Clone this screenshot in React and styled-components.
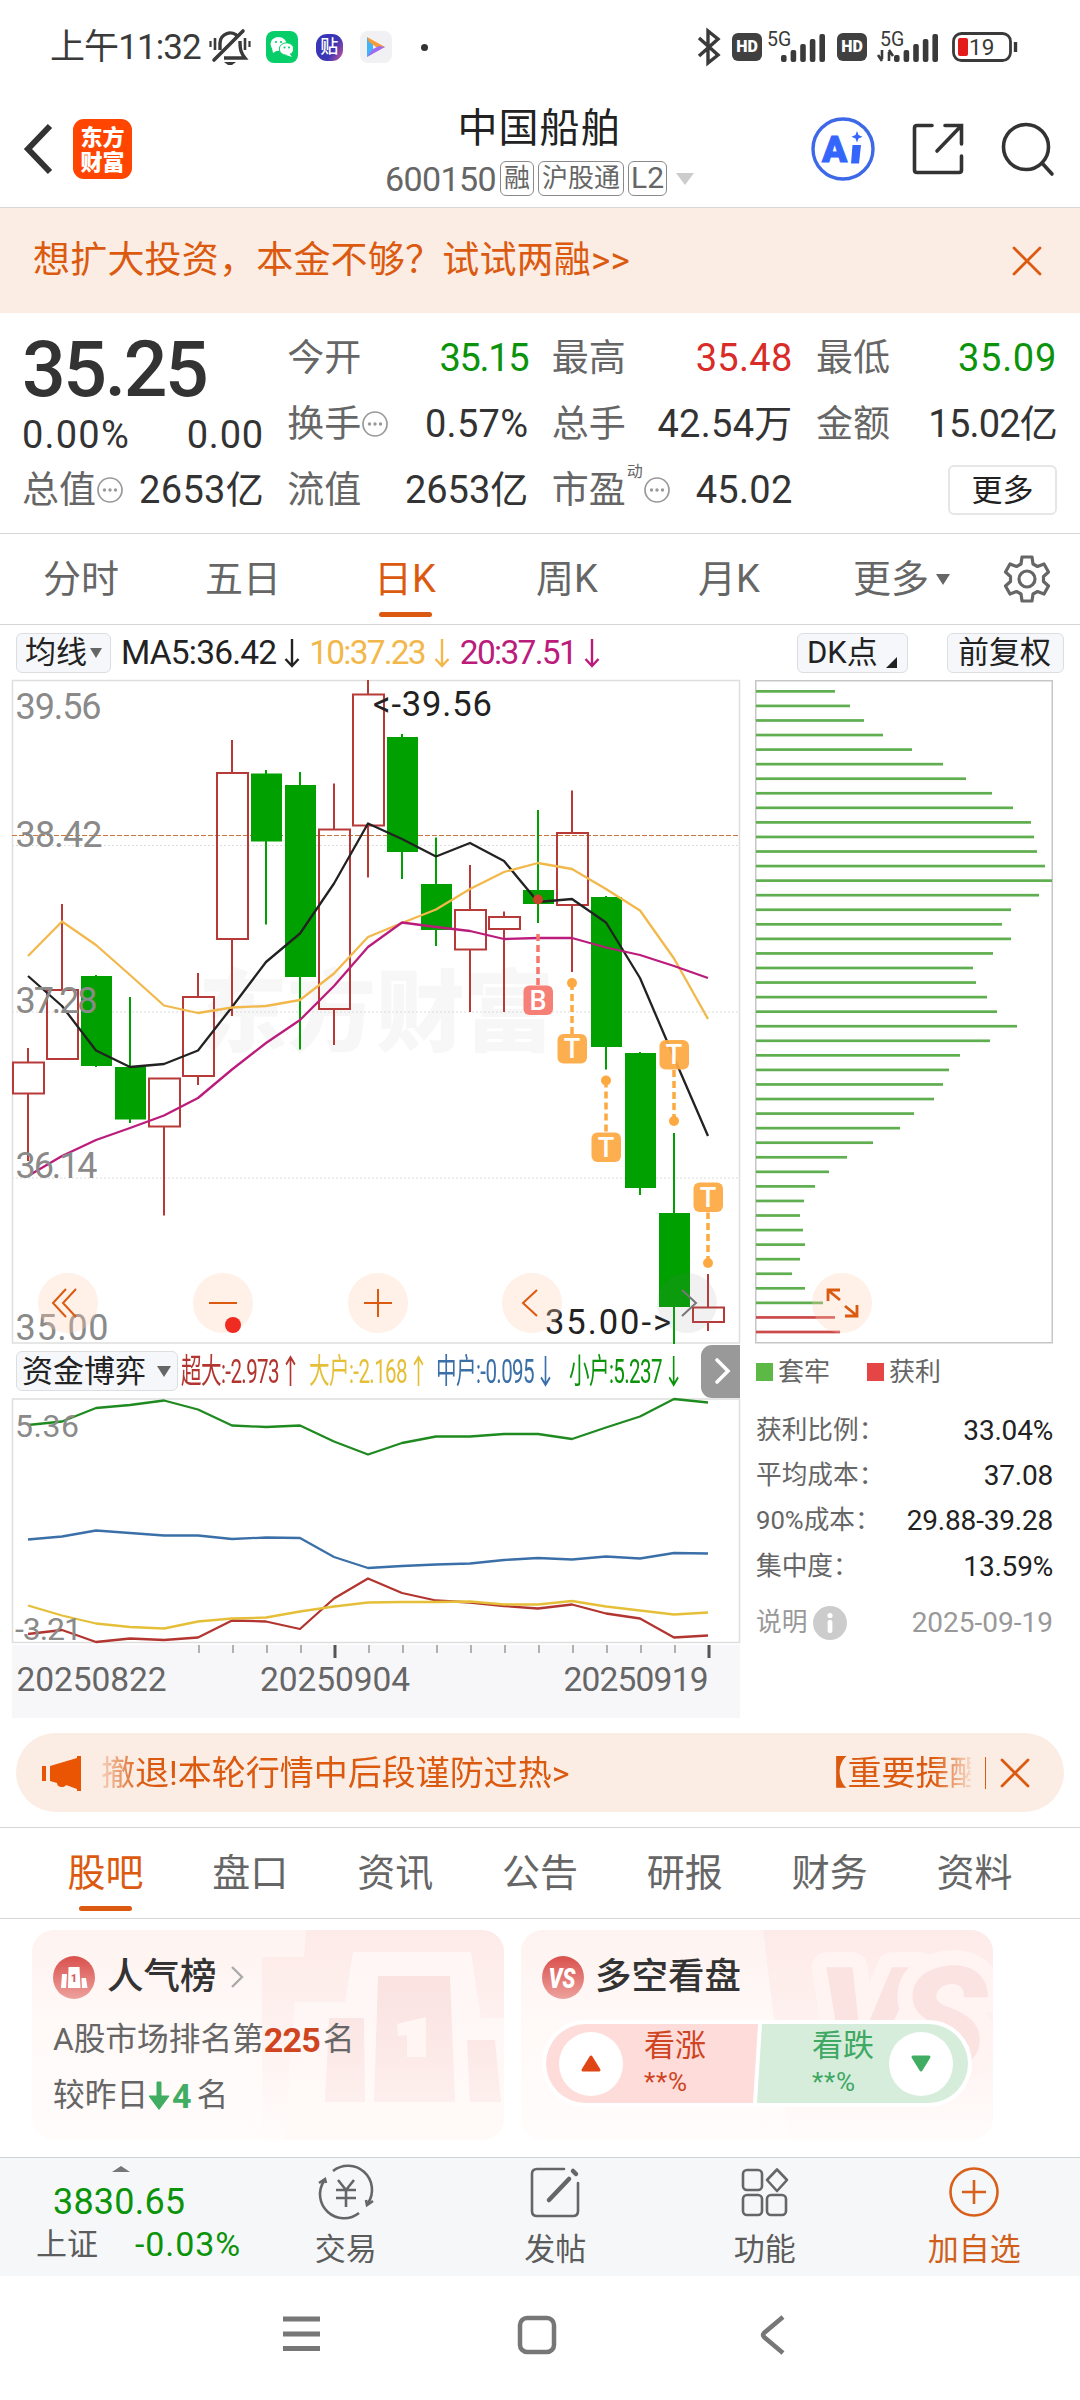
import React from 'react';
import styled, { createGlobalStyle } from 'styled-components';

const GlobalStyle = createGlobalStyle`
  body {
    margin: 0;
    background: #fff;
    font-family: Roboto, 'Noto Sans CJK SC', sans-serif;
    color: #333;
  }
  * {
    box-sizing: border-box;
  }
  svg {
    display: block;
    flex: none;
    overflow: visible;
  }
`;

const ORANGE = '#db5a10';
const GREEN = '#00a000';
const RED = '#b83a38';

const Page = styled.div`
  width: 1080px;
  height: 2400px;
  overflow: hidden;
  display: flex;
  flex-direction: column;
`;

const Text = styled.span`
  font-size: ${(p) => p.$size || 37}px;
  line-height: 1;
  white-space: nowrap;
  color: ${(p) => p.$color || '#333'};
  font-weight: ${(p) => p.$weight || 400};
  letter-spacing: ${(p) => p.$ls || 0}px;
  margin-left: ${(p) => p.$ml || 0}px;
`;

/* ---------- status bar ---------- */

const StatusBar = styled.div`
  height: 95px;
  padding: 0 61px 1px 50px;
  display: flex;
  align-items: center;
  justify-content: space-between;
`;

const StatusGroup = styled.div`
  display: flex;
  align-items: center;
`;

const AppBadge = styled.div`
  width: 32px;
  height: 32px;
  margin-left: ${(p) => p.$ml}px;
  border-radius: 8px;
  background: ${(p) => p.$bg};
  display: flex;
  align-items: center;
  justify-content: center;
`;

const Dot = styled.div`
  width: 7px;
  height: 7px;
  margin-left: 29px;
  border-radius: 50%;
  background: #333;
`;

const HdBadge = styled.div`
  width: 30px;
  height: 28px;
  margin-left: ${(p) => p.$ml}px;
  border-radius: 6px;
  background: #404040;
  color: #fff;
  font-size: 16px;
  font-weight: 900;
  line-height: 28px;
  text-align: center;
`;

const BellOff = () => (
  <svg width="42" height="38" viewBox="0 0 42 38" fill="none" stroke="#3a3a3a" strokeWidth="3.4">
    <path d="M11 22V15a10 10 0 0 1 18-6" />
    <path d="M31 13c0 9 1 12 5 17H15" />
    <path d="M5 32L34 3" strokeWidth="3.6" strokeLinecap="round" />
    <path d="M6 10v12M36 10v12" strokeWidth="2.6" />
    <path d="M1.5 13v6M40.5 13v6" strokeWidth="2.2" />
    <path d="M15 34h12l-4 3h-4z" fill="#3a3a3a" stroke="none" />
  </svg>
);

const WeChat = () => (
  <svg width="26" height="22" viewBox="0 0 26 22" fill="#fff">
    <ellipse cx="9.500" cy="8" rx="8" ry="7" />
    <path d="M3 12l1 5 5-3z" />
    <ellipse cx="17.500" cy="13" rx="7.200" ry="6.200" stroke="#07ce68" />
    <path d="M20 17l3 4-6-2z" />
    <g fill="#07ce68">
      <circle cx="7" cy="6" r="1.100" />
      <circle cx="12" cy="6" r="1.100" />
      <circle cx="15.500" cy="11.500" r="1" />
      <circle cx="20" cy="11.500" r="1" />
    </g>
  </svg>
);

const TiebaBadge = styled.div`
  width: 27px;
  height: 27px;
  margin-left: 18px;
  border-radius: 11px;
  background: linear-gradient(120deg, #3a35b5 60%, #d0559b);
  color: #fff;
  font-size: 18px;
  font-weight: 500;
  line-height: 26px;
  text-align: center;
`;

const PlayMark = () => (
  <svg width="20" height="22" viewBox="0 0 20 22">
    <path d="M1 1v20l6-4V7z" fill="#41b4f7" />
    <path d="M1 1l18 10-6 2L3 6z" fill="#f79a3a" />
    <path d="M19 11L1 21l6-8 6-3z" fill="#a06af0" />
  </svg>
);

const Bluetooth = () => (
  <svg width="24" height="38" viewBox="0 0 24 38" fill="none" stroke="#3a3a3a" strokeWidth="3.400">
    <path d="M2 10l19 17-10 8V3l10 8L2 28" />
  </svg>
);

const Signal = ({ data }) => (
  <svg width="62" height="34" viewBox="0 0 62 34" fill="#3a3a3a">
    <text x={data ? 3 : 0} y="15.500" fontSize="19.500">
      5G
    </text>
    {data && (
      <path d="M5 20v9M5 31l-4-6M12 31v-9M12 20l4 6" stroke="#3a3a3a" strokeWidth="2.600" />
    )}
    {[7, 12, 18, 23, 28].map((h, i) => (
      <rect key={h} x={(data ? 17 : 14) + i * 9.600} y={32 - h} width="5.600" height={h} rx="2" />
    ))}
  </svg>
);

const Battery = () => (
  <svg width="67" height="30" viewBox="0 0 67 30">
    <rect x="1.500" y="1.500" width="57" height="27" rx="8" fill="none" stroke="#3a3a3a" strokeWidth="2.800" />
    <rect x="6" y="6" width="10" height="18" rx="2" fill="#e31b1b" />
    <path d="M63.500 10v10" stroke="#3a3a3a" strokeWidth="3.400" />
    <text x="17" y="23" fontSize="22.500" fill="#3a3a3a">
      19
    </text>
  </svg>
);

/* ---------- header ---------- */

const Header = styled.header`
  height: 113px;
  padding: 3px 25px 8px 24px;
  border-bottom: 1px solid #d6d8da;
  display: grid;
  grid-template-columns: 260px 1fr 260px;
  align-items: center;
`;

const HeaderSide = styled.div`
  display: flex;
  align-items: center;
  justify-content: ${(p) => (p.$end ? 'flex-end' : 'flex-start')};
  gap: ${(p) => p.$gap}px;
`;

const Logo = styled.div`
  width: 59px;
  height: 60px;
  padding-top: 6px;
  border-radius: 11px;
  background: #ff4500;
  color: #fff;
  font-size: 22px;
  font-weight: 900;
  line-height: 25px;
  text-align: center;
`;

const TitleBlock = styled.div`
  display: flex;
  flex-direction: column;
  align-items: center;
  padding-top: 8px;
`;

const SubTitle = styled.div`
  display: flex;
  align-items: center;
  margin-top: 12px;
  height: 36px;
`;

const Tag = styled.span`
  height: 35px;
  margin-left: 4px;
  padding: 0 ${(p) => p.$pad || 3}px;
  border: 1.5px solid #8a8a8a;
  border-radius: 6px;
  color: #666;
  font-size: ${(p) => p.$size || 26}px;
  line-height: 32px;
`;

const Triangle = styled.i`
  width: 0;
  height: 0;
  margin-left: ${(p) => p.$ml || 0}px;
  border-left: ${(p) => p.$w}px solid transparent;
  border-right: ${(p) => p.$w}px solid transparent;
  border-top: ${(p) => p.$h}px solid ${(p) => p.$color || '#666'};
`;

const AiIcon = () => (
  <svg width="64" height="66" viewBox="0 0 64 66">
    <circle cx="32" cy="33" r="30" fill="none" stroke="#3d68e8" strokeWidth="3.400" />
    <text x="11" y="46" fontSize="37" fontWeight="900" fill="#3466fb" stroke="#3466fb">
      A
    </text>
    <path d="M41.500 29h8.500l-2 18.500h-8z" fill="#3466fb" />
    <path d="M46 15l1.500 4 4 1.700-4 1.700-1.500 4-1.500-4-4-1.700 4-1.700z" fill="#3466fb" />
  </svg>
);

const ShareIcon = () => (
  <svg width="52" height="52" viewBox="0 0 52 52" fill="none" stroke="#333" strokeWidth="3.600">
    <path d="M20 2.500H5Q2.500 2.500 2.500 5v42q0 2.500 2.500 2.500h42q2.500 0 2.500-2.500V33" strokeLinecap="round" />
    <path d="M33 2.500h16.500V21M49 3L25 28" strokeLinecap="round" />
  </svg>
);

const SearchIcon = () => (
  <svg width="54" height="56" viewBox="0 0 54 56" fill="none" stroke="#333" strokeWidth="3.600">
    <circle cx="25" cy="26" r="22.500" />
    <path d="M41 42l10 11" strokeLinecap="round" />
  </svg>
);

const Banner = styled.div`
  height: 105px;
  padding: 0 38px 0 33px;
  background: #fcede4;
  display: flex;
  align-items: center;
  justify-content: space-between;
`;

const Close = ({ size = 30 }) => (
  <svg width={size} height={size} viewBox="0 0 30 30" stroke={ORANGE} strokeWidth="2.800" strokeLinecap="round">
    <path d="M2 2l26 26M28 2L2 28" />
  </svg>
);

/* ---------- quote panel ---------- */

const Quote = styled.section`
  height: 221px;
  padding: 12px 23px 0 22px;
  border-bottom: 1px solid #d6d6d6;
  display: grid;
  grid-template-columns: 242px repeat(3, 241px);
  grid-auto-rows: 66px;
  justify-content: space-between;
`;

const PriceCell = styled.div`
  grid-row: span 2;
`;

const Price = styled.div`
  height: 88px;
  font-size: 77px;
  font-weight: 500;
  line-height: 90px;
  letter-spacing: -2.400px;
`;

const Line = styled.div`
  display: flex;
  align-items: center;
  justify-content: space-between;
  height: ${(p) => p.$h || 66}px;
`;

const Label = styled.div`
  display: flex;
  align-items: center;
  gap: 1px;
  font-size: 37px;
  line-height: 1;
  color: #666;
  sup {
    align-self: flex-start;
    margin-top: -8px;
    font-size: 16px;
    line-height: 1;
  }
`;

const MoreButton = styled.button`
  width: 109px;
  height: 50px;
  padding: 0;
  border: 2px solid #e6e6e6;
  border-radius: 6px;
  background: #fff;
  font: inherit;
  font-size: 31px;
  line-height: 1;
  color: #222;
`;

const Hint = () => (
  <svg width="26" height="26" viewBox="0 0 26 26">
    <circle cx="13" cy="13" r="12" fill="none" stroke="#999" strokeWidth="1.700" />
    {[7.500, 13, 18.500].map((x) => (
      <circle key={x} cx={x} cy="13" r="1.700" fill="#999" />
    ))}
  </svg>
);

const Field = ({ label, value, color, hint, sup, ls = 0.300 }) => (
  <Line>
    <Label>
      {label}
      {sup && <sup>{sup}</sup>}
      {hint && <Hint />}
    </Label>
    <Text $size={38} $color={color} $ls={ls}>
      {value}
    </Text>
  </Line>
);

/* ---------- tabs ---------- */

const PeriodTabs = styled.nav`
  height: 91px;
  border-bottom: 1px solid #d6d6d6;
  display: grid;
  grid-template-columns: repeat(5, 162px) 163px 1fr;
`;

const Tab = styled.div`
  display: flex;
  align-items: center;
  justify-content: center;
  position: relative;
  font-size: 38px;
  line-height: 1;
  color: ${(p) => (p.$active ? ORANGE : '#666')};
  &::after {
    content: '';
    display: ${(p) => (p.$active ? 'block' : 'none')};
    position: absolute;
    left: calc(50% - 26.500px);
    bottom: 7px;
    width: 53px;
    height: 5px;
    border-radius: 3px;
    background: ${ORANGE};
  }
`;

const GearIcon = () => (
  <svg width="46" height="48" viewBox="0 0 46 48" fill="none" stroke="#666" strokeWidth="3.200" strokeLinejoin="round">
    <path d="M18 2h10l1 7 4.500 2.500 6.500-2.500 4.500 8-5 4.500v5l5 4.500-4.500 8-6.500-2.500L29 39l-1 7H18l-1-7-4.500-2.500L6 39l-4.500-8 5-4.500v-5l-5-4.500L6 9l6.500 2.500L17 9z" />
    <circle cx="23" cy="24" r="8" />
  </svg>
);

/* ---------- charts ---------- */

const MaBar = styled.div`
  height: 55px;
  padding: 0 16px 0;
  display: flex;
  align-items: center;
`;

const Spacer = styled.div`
  flex: 1;
`;

const Chip = styled.div`
  flex: none;
  width: ${(p) => p.$w}px;
  height: 40px;
  margin-left: ${(p) => p.$ml || 0}px;
  padding-left: ${(p) => p.$pl || 8}px;
  border: 1.500px solid #dcdee2;
  border-radius: 6px;
  background: #f5f7fa;
  color: #222;
  font-size: 31px;
  line-height: 1;
  white-space: nowrap;
  display: flex;
  align-items: center;
`;

const Corner = styled.i`
  align-self: flex-end;
  margin: 0 0 4px 8px;
  border-left: 11px solid transparent;
  border-bottom: 11px solid #222;
`;

const Arrow = ({ color, up, ml = 8, w = 16, h = 30 }) => (
  <svg
    width={w}
    height={h}
    viewBox="0 0 16 30"
    preserveAspectRatio="none"
    fill="none"
    stroke={color}
    strokeWidth="2.400"
    style={{ marginLeft: ml }}
  >
    <path d={up ? 'M8 29V2M1.500 9L8 2l6.500 7' : 'M8 1v27M1.500 21L8 28l6.500-7'} />
  </svg>
);

const ChartArea = styled.section`
  position: relative;
  height: 1038px;
  padding-left: 12px;
  display: flex;
  gap: 15px;
`;

const LeftCol = styled.div`
  width: 728px;
`;

const RightCol = styled.div`
  width: 298px;
`;

const Svg = styled.svg`
  text {
    white-space: pre;
  }
`;

const STEP = 34;
const cx = (i) => 28 + i * STEP;

// direction, high, body top, body bottom, low
const candles = [
  ['r', 1048, 1062.500, 1093.500, 1161],
  ['r', 904, 990, 1059, 1059],
  ['g', 975, 976, 1066, 1067],
  ['g', 997, 1067, 1119.500, 1123],
  ['r', 1078, 1078.500, 1126.500, 1215.500],
  ['r', 973, 997, 1076, 1085],
  ['r', 740, 773, 939, 1016],
  ['g', 770, 773.500, 841.500, 924.500],
  ['g', 772, 785, 977, 1049.500],
  ['r', 783.500, 829.500, 1009, 1045],
  ['r', 680, 694.500, 825.500, 877.500],
  ['g', 734, 737, 852, 879],
  ['g', 837.500, 884, 930, 946],
  ['r', 865, 910, 949.500, 1012],
  ['r', 911.500, 917, 929, 1012],
  ['g', 810, 890, 904, 923],
  ['r', 790.500, 833, 905, 972],
  ['g', 896, 897, 1047, 1069.500],
  ['g', 1052, 1053, 1188, 1195],
  ['g', 1133, 1213, 1307, 1344],
  ['r', 1274, 1307.500, 1322, 1331],
];

const ma5 = [976, 1006, 1050.500, 1067, 1064, 1050.500, 1007, 962, 933.500, 883.500, 823.500, 839, 856.500, 843, 861, 902, 899, 922.500, 978, 1057.500, 1136];
const ma10 = [956, 921.500, 945, 975, 1005.500, 1013, 1007.500, 1006, 1000, 973.500, 937, 923, 909.500, 889, 872, 863, 869, 889, 910.500, 958.500, 1019];
const ma20 = [1176, 1156, 1140, 1128, 1115.500, 1098, 1069.500, 1043, 1020, 986, 947, 922.500, 927, 931, 939, 938, 938, 947.500, 955, 966, 978];

const funds = [
  ['#1f8a1f', [1425, 1421.500, 1408, 1405, 1400.500, 1409.500, 1425.500, 1427, 1425.500, 1441.500, 1454.500, 1443, 1436.500, 1436.500, 1434, 1434, 1439, 1427.500, 1416.500, 1399, 1402.500]],
  ['#3a6fa8', [1539.500, 1536.500, 1530.500, 1533, 1535.500, 1535.500, 1539, 1537.500, 1538, 1557, 1568, 1566, 1564.500, 1563.500, 1560, 1558, 1559.500, 1556.500, 1558.500, 1553, 1553.500]],
  ['#b23530', [1634, 1630, 1642, 1638.500, 1640, 1637.500, 1620.500, 1621.500, 1629, 1598.500, 1578.500, 1593, 1600.500, 1602.500, 1606, 1608.500, 1604.500, 1613.500, 1618.500, 1637.500, 1635.500]],
  ['#e6bf38', [1605.500, 1615.500, 1623.500, 1627, 1628.500, 1621.500, 1618.500, 1617.500, 1611.500, 1606.500, 1602.500, 1602, 1602, 1601.500, 1604.500, 1604.500, 1601, 1606.500, 1610.500, 1614.500, 1612.500]],
];

// candle index, letter, box top, dot y
const marks = [
  [15, 'B', 985.500, 899.500],
  [16, 'T', 1034, 983],
  [17, 'T', 1132.500, 1080.500],
  [19, 'T', 1040, 1121],
  [20, 'T', 1182.500, 1263],
];

const chips = [79, 94, 108, 127, 156, 187, 210, 236, 257, 275, 278, 281, 289, 296, 283, 255, 246, 255, 237, 217, 220, 231, 241, 261, 234, 204, 193, 187, 178, 158, 144, 117, 91, 73, 59, 48, 44, 47, 49, 44, 36, 49, 67, 79, 84];

const toPoints = (ys) => ys.map((y, i) => `${cx(i)},${y}`).join(' ');

const Series = ({ ys, color }) => (
  <polyline points={toPoints(ys)} fill="none" stroke={color} strokeWidth="2.300" strokeLinejoin="round" />
);

const Candle = ({ i, c: [dir, high, top, bottom, low] }) => {
  const x = cx(i);
  if (dir === 'g') {
    return (
      <g fill={GREEN}>
        <rect x={x - 1} y={high} width="2" height={low - high} />
        <rect x={x - 15} y={top} width="31" height={bottom - top} />
      </g>
    );
  }
  return (
    <g fill="none" stroke={RED} strokeWidth="2">
      <path d={`M${x} ${high}V${top}M${x} ${bottom}V${low}`} />
      <rect x={x - 15} y={top} width="31" height={bottom - top} />
    </g>
  );
};

const Mark = ({ i, letter, top, dot }) => {
  const x = cx(i);
  const color = letter === 'B' ? '#f6766c' : '#fda942';
  const from = letter === 'B' ? 934 : dot;
  const to = dot > top ? top + 30 : top;
  return (
    <g>
      <line x1={x} x2={x} y1={from} y2={to} stroke={color} strokeWidth="3.500" strokeDasharray="7 4" />
      <circle cx={x} cy={dot} r="5" fill={letter === 'B' ? '#c8452c' : color} />
      <rect x={x - 14.500} y={top} width="29.500" height="29.500" rx="6" fill={color} fillOpacity=".93" />
      <text x={x} y={top + 24} fontSize="27" fontWeight="500" fill="#fff" textAnchor="middle">
        {letter}
      </text>
    </g>
  );
};

const KLine = () => (
  <Svg width="728" height="664" viewBox="12 680 728 664">
    <text x="198" y="1044" fontSize="89" fontWeight="900" fill="#f7f7f7">
      东方财富
    </text>
    <rect x="12.500" y="680.500" width="727" height="662.500" fill="none" stroke="#dedede" strokeWidth="1.500" />
    {[845.500, 1012, 1178].map((y) => (
      <line key={y} x1="12" x2="740" y1={y} y2={y} stroke="#dcdcdc" strokeDasharray="2 2" />
    ))}
    <line x1="12" x2="740" y1="835.500" y2="835.500" stroke="#c9763d" strokeDasharray="5 2" />
    {candles.map((c, i) => (
      <Candle key={i} i={i} c={c} />
    ))}
    <Series ys={ma5} color="#222" />
    <Series ys={ma10} color="#f2b84b" />
    <Series ys={ma20} color="#bb1c7c" />
    {marks.map(([i, letter, top, dot]) => (
      <Mark key={i} i={i} letter={letter} top={top} dot={dot} />
    ))}
    <g fontSize="36" fill="#8a8a8a">
      <text x="15.500" y="718.500" textLength="86">39.56</text>
      <text x="15.500" y="846.500" textLength="87">38.42</text>
      <text x="15.500" y="1012.500" textLength="82">37.28</text>
      <text x="15.500" y="1178" textLength="82">36.14</text>
    </g>
    <g fill="#222" fontSize="34.500">
      <text x="373" y="716" textLength="119">{'<-39.56'}</text>
      <text x="545" y="1334" textLength="126">{'35.00->'}</text>
    </g>
    <text x="15.500" y="1340" fontSize="36" fill="#8a8a8a" textLength="93">35.00</text>
  </Svg>
);

const Controls = styled.div`
  position: absolute;
  left: 38px;
  top: 593px;
  display: flex;
  gap: 94.800px;
`;

const RoundButton = styled.div`
  width: 60px;
  height: 60px;
  border-radius: 50%;
  background: ${(p) => (p.$off ? 'rgba(120, 120, 120, 0.1)' : 'rgba(255, 205, 178, 0.3)')};
  display: flex;
  align-items: center;
  justify-content: center;
  position: relative;
`;

const RedDot = styled.i`
  position: absolute;
  left: 32px;
  top: 44px;
  width: 16px;
  height: 16px;
  border-radius: 50%;
  background: #ef2b22;
`;

const controlIcons = [
  'M28 16L15 30l13 14M38 16L25 30l13 14',
  'M16 30h28',
  'M16 30h28M30 16v28',
  'M35 17L21 30l14 13',
  'M25 17l14 13-14 13',
  'M28 27L17 18M16 28V17h12M33 33l11 9M45 32v11H33',
];

const FundBar = styled.div`
  height: 54px;
  padding-left: 4px;
  display: flex;
  align-items: center;
`;

const Condensed = styled.div`
  width: ${(p) => p.$w}px;
  height: 34px;
  margin-left: ${(p) => p.$ml}px;
  span {
    display: flex;
    width: max-content;
    align-items: center;
    font-size: 34px;
    line-height: 34px;
    white-space: nowrap;
    letter-spacing: -1px;
    color: ${(p) => p.$color};
    transform: scaleX(${(p) => p.$scale || 0.605});
    transform-origin: left;
  }
`;

const NextButton = styled.div`
  width: 39px;
  height: 53px;
  padding-left: 4px;
  margin-left: auto;
  border-radius: 11px 0 0 11px;
  background: #999;
  display: flex;
  align-items: center;
  justify-content: center;
`;

const FundValue = ({ color, up, w, ml, scale, children }) => (
  <Condensed $color={color} $w={w} $ml={ml} $scale={scale}>
    <span>
      {children}
      <Arrow color={color} up={up} w={18} h={32} ml={10} />
    </span>
  </Condensed>
);

const FundChart = () => (
  <Svg width="728" height="320" viewBox="12 1398 728 320">
    <rect x="12.500" y="1399" width="727" height="243.500" fill="none" stroke="#dedede" strokeWidth="1.500" />
    <rect x="12" y="1645" width="728" height="73" fill="#f7f7fa" />
    {funds.map(([color, ys]) => (
      <Series key={color} ys={ys} color={color} />
    ))}
    <g fontSize="32" fill="#8a8a8a">
      <text x="15" y="1437" textLength="64">5.36</text>
      <text x="15" y="1639.500" textLength="67">-3.21</text>
    </g>
    {Array.from({ length: 16 }, (_, i) => {
      const big = i === 4 || i === 15;
      const x = 199 + i * STEP;
      return (
        <line key={i} x1={x} x2={x} y1="1645" y2={big ? 1658 : 1653} stroke={big ? '#555' : '#999'} strokeWidth={big ? 3 : 1.500} />
      );
    })}
    <g fontSize="33.500" fill="#666">
      <text x="16.500" y="1691" textLength="150">20250822</text>
      <text x="260" y="1691" textLength="150">20250904</text>
      <text x="563.500" y="1691" textLength="145">20250919</text>
    </g>
  </Svg>
);

const ChipChart = () => (
  <Svg width="298" height="664" viewBox="0 0 298 664">
    <rect x=".75" y=".75" width="296.500" height="662" fill="none" stroke="#c6c6c6" strokeWidth="1.500" />
    {chips.map((w, i) => (
      <rect key={i} x="1" y={10 + i * 14.560} width={w} height="2.700" fill={i > 42 ? '#cc4a4a' : '#5fae4f'} />
    ))}
  </Svg>
);

const Legend = styled.div`
  height: 56px;
  padding-left: 1px;
  display: flex;
  align-items: center;
  font-size: 26px;
  line-height: 1;
  color: #666;
  i {
    width: 17px;
    height: 18px;
    margin-right: 5px;
  }
  i:first-child {
    background: #5cb946;
  }
  i:last-of-type {
    margin-left: 37px;
    background: #e64545;
  }
`;

const Stats = styled.div`
  margin-top: 8px;
`;

const StatRow = styled.div`
  height: 45.300px;
  padding-left: 1px;
  display: flex;
  align-items: center;
  justify-content: space-between;
  font-size: 25.700px;
  line-height: 1;
  color: #666;
  b {
    font-size: 28px;
    font-weight: 400;
    letter-spacing: -0.200px;
    color: #222;
  }
`;

const NoteRow = styled(StatRow)`
  height: 67px;
  color: #999;
  div {
    display: flex;
    align-items: center;
    gap: 6px;
  }
  b {
    color: #999;
    letter-spacing: 0;
  }
`;

const InfoIcon = () => (
  <svg width="34" height="34" viewBox="0 0 34 34">
    <circle cx="17" cy="17" r="17" fill="#ccc" />
    <circle cx="17" cy="9.500" r="2.600" fill="#fff" />
    <rect x="14.600" y="14" width="4.800" height="13" rx="2" fill="#fff" />
  </svg>
);

/* ---------- notice ---------- */

const Notice = styled.div`
  height: 79px;
  margin: 15px 16px 15px;
  padding: 0 34px 0 26px;
  border-radius: 40px;
  background: #fcede4;
  display: flex;
  align-items: center;
`;

const Marquee = styled.div`
  width: 880px;
  margin-left: 10px;
  padding-left: 9px;
  overflow: hidden;
  display: flex;
  justify-content: space-between;
  font-size: 34px;
  line-height: 44px;
  white-space: nowrap;
  color: ${ORANGE};
  mask-image: linear-gradient(90deg, transparent, #000 50px, #000 842px, transparent 884px);
  span:last-child {
    width: 157px;
  }
`;

const Divider = styled.i`
  width: 1.500px;
  height: 32px;
  margin: 0 14px 0 14px;
  background: ${ORANGE};
`;

const Megaphone = () => (
  <svg width="40" height="36" viewBox="0 0 40 36" fill="#ea5504">
    <rect x="0" y="11" width="4" height="15" />
    <path d="M8 11L35 3V1h4v35h-4v-2L24 30c-1 3-9 3-9-2L8 26z" />
  </svg>
);

/* ---------- sections ---------- */

const SectionTabs = styled.nav`
  height: 92px;
  padding: 0 33px;
  border-top: 1px solid #d6d6d6;
  border-bottom: 1px solid #d6d6d6;
  display: grid;
  grid-template-columns: repeat(7, 1fr);
`;

const Cards = styled.div`
  height: 238px;
  padding: 11px 32px 17px;
  display: flex;
  gap: 17px;
`;

const Card = styled.div`
  position: relative;
  width: 472px;
  height: 210px;
  padding: 26px 21px 0;
  border-radius: 22px;
  overflow: hidden;
  background: linear-gradient(180deg, #fef3f1, #fffaf8 50%, #fffcfb);
`;

const CardArt = styled.svg`
  position: absolute;
  right: 0;
  top: 0;
`;

const CardTitle = styled.div`
  position: relative;
  display: flex;
  align-items: center;
  height: 42px;
`;

const RankLine = styled.div`
  position: relative;
  display: flex;
  align-items: center;
  height: 56px;
  font-size: 31.700px;
  line-height: 1;
  color: #666;
  &:nth-of-type(2) {
    margin-top: 14px;
  }
  b {
    font-size: 34px;
    font-weight: 700;
    letter-spacing: -0.800px;
    color: ${(p) => p.$accent};
  }
`;

const Podium = () => (
  <svg width="42" height="43" viewBox="0 0 42 43">
    <defs>
      <linearGradient id="badge" x2="0" y2="1">
        <stop stopColor="#d9504c" />
        <stop offset="1" stopColor="#eda19d" />
      </linearGradient>
    </defs>
    <ellipse cx="21" cy="21.500" rx="21" ry="21.500" fill="url(#badge)" />
    <path d="M9 18h5l-1 14H8zM15.500 11h11l1 21h-12.500zM28.500 22h4.500l1.500 10h-5.500z" fill="#fff" />
    <text x="21" y="26" fontSize="11" fontWeight="900" fill="#d9605c" textAnchor="middle">
      1
    </text>
  </svg>
);

const VsBadge = () => (
  <svg width="42" height="43" viewBox="0 0 42 43">
    <ellipse cx="21" cy="21.500" rx="21" ry="21.500" fill="url(#badge)" />
    <text x="20" y="31.500" fontSize="28" fontWeight="900" fontStyle="italic" fill="#fff" textAnchor="middle" textLength="27" lengthAdjust="spacingAndGlyphs">
      VS
    </text>
  </svg>
);

const VotePill = styled.div`
  position: relative;
  width: 430px;
  height: 87px;
  margin-top: 22px;
  border: 4px solid #fff;
  border-radius: 44px;
  overflow: hidden;
  display: flex;
  background: #fff;
`;

const VoteSide = styled.div`
  width: ${(p) => (p.$up ? 212 : 216)}px;
  margin-left: ${(p) => (p.$up ? 0 : -1)}px;
  flex: none;
  display: flex;
  align-items: center;
  background: ${(p) => (p.$up ? '#fddcd9' : '#d6eddb')};
  color: ${(p) => (p.$up ? '#cf4523' : '#3fa863')};
  clip-path: ${(p) =>
    p.$up ? 'polygon(0 0, 100% 0, calc(100% - 5px) 100%, 0 100%)' : 'polygon(5px 0, 100% 0, 100% 100%, 0 100%)'};
`;

const VoteCircle = styled.div`
  width: 64px;
  height: 64px;
  margin-left: ${(p) => p.$ml}px;
  border-radius: 50%;
  background: #fff;
  display: flex;
  align-items: center;
  justify-content: center;
`;

const VoteText = styled.div`
  margin-left: ${(p) => p.$ml}px;
  font-size: 31px;
  line-height: 36px;
  small {
    display: block;
    font-size: 26px;
    line-height: 36px;
    letter-spacing: 0.800px;
  }
`;

/* ---------- bottom ---------- */

const BottomNav = styled.nav`
  height: 119px;
  border-top: 1px solid #cfd3d6;
  background: #f6f7f9;
  display: grid;
  grid-template-columns: 241px repeat(4, 209.500px);
`;

const IndexCell = styled.div`
  padding: 8px 0 0 36px;
`;

const IndexArrow = styled.i`
  display: block;
  width: 0;
  margin-left: 76px;
  border-left: 9px solid transparent;
  border-right: 9px solid transparent;
  border-bottom: 6px solid #777;
`;

const IndexRow = styled.div`
  display: flex;
  align-items: center;
  justify-content: space-between;
  margin-top: ${(p) => p.$mt}px;
`;

const NavItem = styled.div`
  display: flex;
  flex-direction: column;
  align-items: center;
  padding-top: 7px;
  font-size: 31px;
  line-height: 1;
  color: ${(p) => p.$color || '#5c5c5c'};
  svg {
    margin-bottom: 15px;
  }
`;

const navIcon = { width: 56, height: 54, viewBox: '0 0 56 54', fill: 'none', strokeWidth: 2.600 };

const SystemNav = styled.div`
  height: 124px;
  padding: 39px 0 0 283px;
  display: flex;
`;

const MenuIcon = styled.svg`
  margin-right: 197px;
`;

const HomeIcon = styled.svg`
  margin-right: 202px;
`;

const periods = ['分时', '五日', '日K', '周K', '月K'];
const sections = ['股吧', '盘口', '资讯', '公告', '研报', '财务', '资料'];
const stats = [
  ['获利比例：', '33.04%'],
  ['平均成本：', '37.08'],
  ['90%成本：', '29.88-39.28'],
  ['集中度：', '13.59%'],
];

const App = () => (
  <Page>
    <GlobalStyle />
    <StatusBar>
      <StatusGroup>
        <Text $size={35} $ls={-0.900} $color="#3a3a3a">
          上午11:32
        </Text>
        <StatusGroup style={{ marginLeft: 8 }}>
          <BellOff />
        </StatusGroup>
        <AppBadge $ml={15} $bg="#07ce68">
          <WeChat />
        </AppBadge>
        <TiebaBadge>贴</TiebaBadge>
        <AppBadge $ml={17} $bg="#f1f1f3">
          <PlayMark />
        </AppBadge>
        <Dot />
      </StatusGroup>
      <StatusGroup>
        <Bluetooth />
        <HdBadge $ml={11}>HD</HdBadge>
        <StatusGroup style={{ marginLeft: 5, marginRight: 8 }}>
          <Signal />
        </StatusGroup>
        <HdBadge $ml={0}>HD</HdBadge>
        <StatusGroup style={{ marginLeft: 10, marginRight: 13 }}>
          <Signal data />
        </StatusGroup>
        <Battery />
      </StatusGroup>
    </StatusBar>

    <Header>
      <HeaderSide $gap={20}>
        <svg width="29" height="52" viewBox="0 0 29 52" fill="none" stroke="#333" strokeWidth="6">
          <path d="M26 3L4 26l22 23" />
        </svg>
        <Logo>
          东方
          <br />
          财富
        </Logo>
      </HeaderSide>
      <TitleBlock>
        <Text $size={40} $ls={1} $color="#222">
          中国船舶
        </Text>
        <SubTitle>
          <Text $size={34} $ls={-0.600} $color="#666">
            600150
          </Text>
          <Tag>融</Tag>
          <Tag>沪股通</Tag>
          <Tag $size={30} $pad={2}>
            L2
          </Tag>
          <Triangle $ml={9} $w={9.500} $h={12} $color="#ccc" />
        </SubTitle>
      </TitleBlock>
      <HeaderSide $end $gap={37}>
        <AiIcon />
        <ShareIcon />
        <SearchIcon />
      </HeaderSide>
    </Header>

    <Banner>
      <Text $size={37} $ls={0.200} $color={ORANGE}>
        想扩大投资，本金不够？试试两融&gt;&gt;
      </Text>
      <Close />
    </Banner>

    <Quote>
      <PriceCell>
        <Price>35.25</Price>
        <Line $h={44}>
          <Text $size={38} $ls={1.200}>
            0.00%
          </Text>
          <Text $size={38} $ls={0.800}>
            0.00
          </Text>
        </Line>
      </PriceCell>
      <Field label="今开" value="35.15" color="#0b930b" ls={-1.300} />
      <Field label="最高" value="35.48" color="#d92b28" />
      <Field label="最低" value="35.09" color="#0b930b" ls={0.700} />
      <Field label="换手" hint value="0.57%" />
      <Field label="总手" value="42.54万" />
      <Field label="金额" value="15.02亿" ls={-0.800} />
      <Field label="总值" hint value="2653亿" />
      <Field label="流值" value="2653亿" ls={0} />
      <Field label="市盈" sup="动" hint value="45.02" />
      <Line style={{ justifyContent: 'flex-end' }}>
        <MoreButton>更多</MoreButton>
      </Line>
    </Quote>

    <PeriodTabs>
      {periods.map((p) => (
        <Tab key={p} $active={p === '日K'}>
          {p}
        </Tab>
      ))}
      <Tab style={{ paddingLeft: 20 }}>
        更多
        <Triangle $ml={7} $w={7} $h={11} />
      </Tab>
      <Tab>
        <GearIcon />
      </Tab>
    </PeriodTabs>

    <MaBar>
      <Chip $w={95}>
        均线
        <Triangle $ml={3} $w={6.500} $h={10} />
      </Chip>
      <Text $size={33.500} $ml={10} $ls={-0.800} $color="#222">
        MA5:36.42
      </Text>
      <Arrow color="#222" />
      <Text $size={33.500} $ml={9} $ls={-1.800} $color="#f2b84b">
        10:37.23
      </Text>
      <Arrow color="#f2b84b" ml={9} />
      <Text $size={33.500} $ml={10} $ls={-1.700} $color="#bb1c7c">
        20:37.51
      </Text>
      <Arrow color="#bb1c7c" />
      <Spacer />
      <Chip $w={111} $pl={9}>
        DK点
        <Corner />
      </Chip>
      <Chip $w={117} $ml={39} $pl={10}>
        前复权
      </Chip>
    </MaBar>

    <ChartArea>
      <LeftCol>
        <KLine />
        <FundBar>
          <Chip $w={162} $pl={5}>
            资金博弈
            <Triangle $ml={11} $w={7} $h={11} />
          </Chip>
          <FundValue color="#b23530" up w={117} ml={3}>
            超大:-2.973
          </FundValue>
          <FundValue color="#e6bf38" up w={115} ml={11}>
            大户:-2.168
          </FundValue>
          <FundValue color="#3a6fa8" w={122} ml={12}>
            中户:-0.095
          </FundValue>
          <FundValue color="#0b930b" w={110} ml={11}>
            小户:5.237
          </FundValue>
          <NextButton>
            <svg width="16" height="26" viewBox="0 0 16 26" fill="none" stroke="#fff" strokeWidth="3.600">
              <path d="M2 2l11 11L2 24" strokeLinecap="round" />
            </svg>
          </NextButton>
        </FundBar>
        <FundChart />
      </LeftCol>
      <RightCol>
        <ChipChart />
        <Legend>
          <i />
          套牢
          <i />
          获利
        </Legend>
        <Stats>
          {stats.map(([label, value]) => (
            <StatRow key={label}>
              {label}
              <b>{value}</b>
            </StatRow>
          ))}
          <NoteRow>
            <div>
              说明
              <InfoIcon />
            </div>
            <b>2025-09-19</b>
          </NoteRow>
        </Stats>
      </RightCol>
      <Controls>
        {controlIcons.map((d, i) => (
          <RoundButton key={d} $off={i === 4}>
            <svg width="60" height="60" viewBox="0 0 60 60" fill="none" stroke={i === 4 ? '#777' : ORANGE} strokeWidth={i === 5 ? 2.800 : 2}>
              <path d={d} />
            </svg>
            {i === 1 && <RedDot />}
          </RoundButton>
        ))}
      </Controls>
    </ChartArea>

    <Notice>
      <Megaphone />
      <Marquee>
        <span>撤退!本轮行情中后段谨防过热&gt;</span>
        <span>【重要提醒】</span>
      </Marquee>
      <Divider />
      <Close />
    </Notice>

    <SectionTabs>
      {sections.map((s, i) => (
        <Tab key={s} $active={i === 0}>
          {s}
        </Tab>
      ))}
    </SectionTabs>

    <Cards>
      <Card>
        <CardArt width="250" height="210" viewBox="0 0 250 210">
          <defs>
            <linearGradient id="shade" x2="0" y2="1">
              <stop stopColor="#fdebe9" />
              <stop offset="1" stopColor="#fdebe9" stopOpacity="0" />
            </linearGradient>
            <linearGradient id="tint" x2="0" y2="1">
              <stop stopColor="#f9dddb" stopOpacity=".8" />
              <stop offset="1" stopColor="#f9dddb" stopOpacity=".35" />
            </linearGradient>
          </defs>
          <path d="M52 0h198v210H8V27h42z" fill="url(#shade)" />
          <path d="M41 72h50l8-50h118l10 66h23v122H30z" fill="#fff9f7" fillOpacity=".8" />
          <g fill="url(#tint)">
            <path d="M75 88h35l1 84H71zM124 46h72l5 126h-81zM213 110h28l6 62h-31z" />
          </g>
          <path d="M143 94l29-7v40h-19v-22l-9 1z" fill="#fff6f4" />
        </CardArt>
        <CardTitle>
          <Podium />
          <Text $size={36.500} $weight={500} $ml={12}>
            人气榜
          </Text>
          <svg width="14" height="24" viewBox="0 0 14 24" fill="none" stroke="#aaa" strokeWidth="2.400" style={{ marginLeft: 13 }}>
            <path d="M2 2l10 10L2 22" />
          </svg>
        </CardTitle>
        <RankLine $accent="#cf4520">
          A股市场排名第<b>225</b>
          <Text $size={31.500} $color="#666" $ml={3}>
            名
          </Text>
        </RankLine>
        <RankLine $accent="#41ad62">
          较昨日
          <svg width="22" height="30" viewBox="0 0 22 30" fill="#41ad62" stroke="#41ad62">
            <path d="M9 1h4v14h8L11 28.500 1 15h8z" strokeLinejoin="round" />
          </svg>
          <Text as="b" $ml={2}>
            4
          </Text>
          <Text $size={31.500} $color="#666" $ml={6}>
            名
          </Text>
        </RankLine>
      </Card>

      <Card>
        <CardArt width="250" height="210" viewBox="0 0 250 210">
          <path d="M20 0h230v210H46z" fill="url(#shade)" />
          <text
            x="74"
            y="140"
            fontSize="144"
            fontWeight="900"
            fontStyle="italic"
            textLength="170"
            fill="#fbe3e1"
            stroke="#fff4f2"
            strokeWidth="30"
            strokeLinejoin="round"
            paintOrder="stroke"
          >
            VS
          </text>
        </CardArt>
        <CardTitle>
          <VsBadge />
          <Text $size={36.500} $weight={500} $ml={11}>
            多空看盘
          </Text>
        </CardTitle>
        <VotePill>
          <VoteSide $up>
            <VoteCircle $ml={13}>
              <svg width="20" height="17" viewBox="0 0 20 17">
                <path d="M10 2l8 13H2z" fill="#e04515" stroke="#e04515" strokeWidth="3" strokeLinejoin="round" />
              </svg>
            </VoteCircle>
            <VoteText $ml={21}>
              看涨<small>**%</small>
            </VoteText>
          </VoteSide>
          <VoteSide>
            <VoteText $ml={55}>
              看跌<small>**%</small>
            </VoteText>
            <VoteCircle $ml={15}>
              <svg width="20" height="17" viewBox="0 0 20 17">
                <path d="M10 15l8-13H2z" fill="#41ad62" stroke="#41ad62" strokeWidth="3" strokeLinejoin="round" />
              </svg>
            </VoteCircle>
          </VoteSide>
        </VotePill>
      </Card>
    </Cards>

    <BottomNav>
      <IndexCell>
        <IndexArrow />
        <IndexRow $mt={12}>
          <Text $size={36} $ls={0.200} $ml={17} $color="#0b930b">
            3830.65
          </Text>
        </IndexRow>
        <IndexRow $mt={7}>
          <Text $size={31} $color="#5c5c5c">
            上证
          </Text>
          <Text $size={34} $ls={0.900} $color="#0b930b">
            -0.03%
          </Text>
        </IndexRow>
      </IndexCell>
      <NavItem>
        <svg {...navIcon} stroke="#666">
          <path d="M15 6a24 24 0 0 1 35 32M41 48A24 24 0 0 1 6 16" />
          <path d="M1 18l6-4 1 4M55 36l-6 4-1-5" />
          <path d="M20 15l8 10 8-10M18 25h20M18 33h20M28 25v17" />
        </svg>
        交易
      </NavItem>
      <NavItem>
        <svg {...navIcon} stroke="#666">
          <path d="M37 4H10q-5 0-5 5v37q0 5 5 5h36q5 0 5-5V18" strokeLinecap="round" />
          <path d="M42 14L22 35M46 6l3 3" strokeWidth="4.500" strokeLinecap="round" />
        </svg>
        发帖
      </NavItem>
      <NavItem>
        <svg {...navIcon} stroke="#666">
          <rect x="6" y="5" width="19" height="20" rx="4" />
          <rect x="6" y="30" width="19" height="20" rx="4" />
          <rect x="30" y="30" width="19" height="20" rx="4" />
          <path d="M40 4.500L50 15 40 26 30 15z" strokeLinejoin="round" />
        </svg>
        功能
      </NavItem>
      <NavItem $color="#d05f1c">
        <svg {...navIcon} stroke="#d9601a">
          <circle cx="28" cy="27" r="23.500" />
          <path d="M28 15v24M16 27h24" />
        </svg>
        加自选
      </NavItem>
    </BottomNav>

    <SystemNav>
      <MenuIcon width="37" height="38" viewBox="0 0 37 38" stroke="#777" strokeWidth="5">
        <path d="M0 4h37M0 19h37M0 33.500h37" />
      </MenuIcon>
      <HomeIcon width="40" height="40" viewBox="0 0 40 40" fill="none" stroke="#777" strokeWidth="4.500">
        <rect x="3" y="3" width="34" height="34" rx="7" />
      </HomeIcon>
      <svg width="26" height="40" viewBox="0 0 26 40" fill="none" stroke="#777" strokeWidth="4.500">
        <path d="M24 2L5 18q-2 2 0 4l19 16" />
      </svg>
    </SystemNav>
  </Page>
);

export default App;
